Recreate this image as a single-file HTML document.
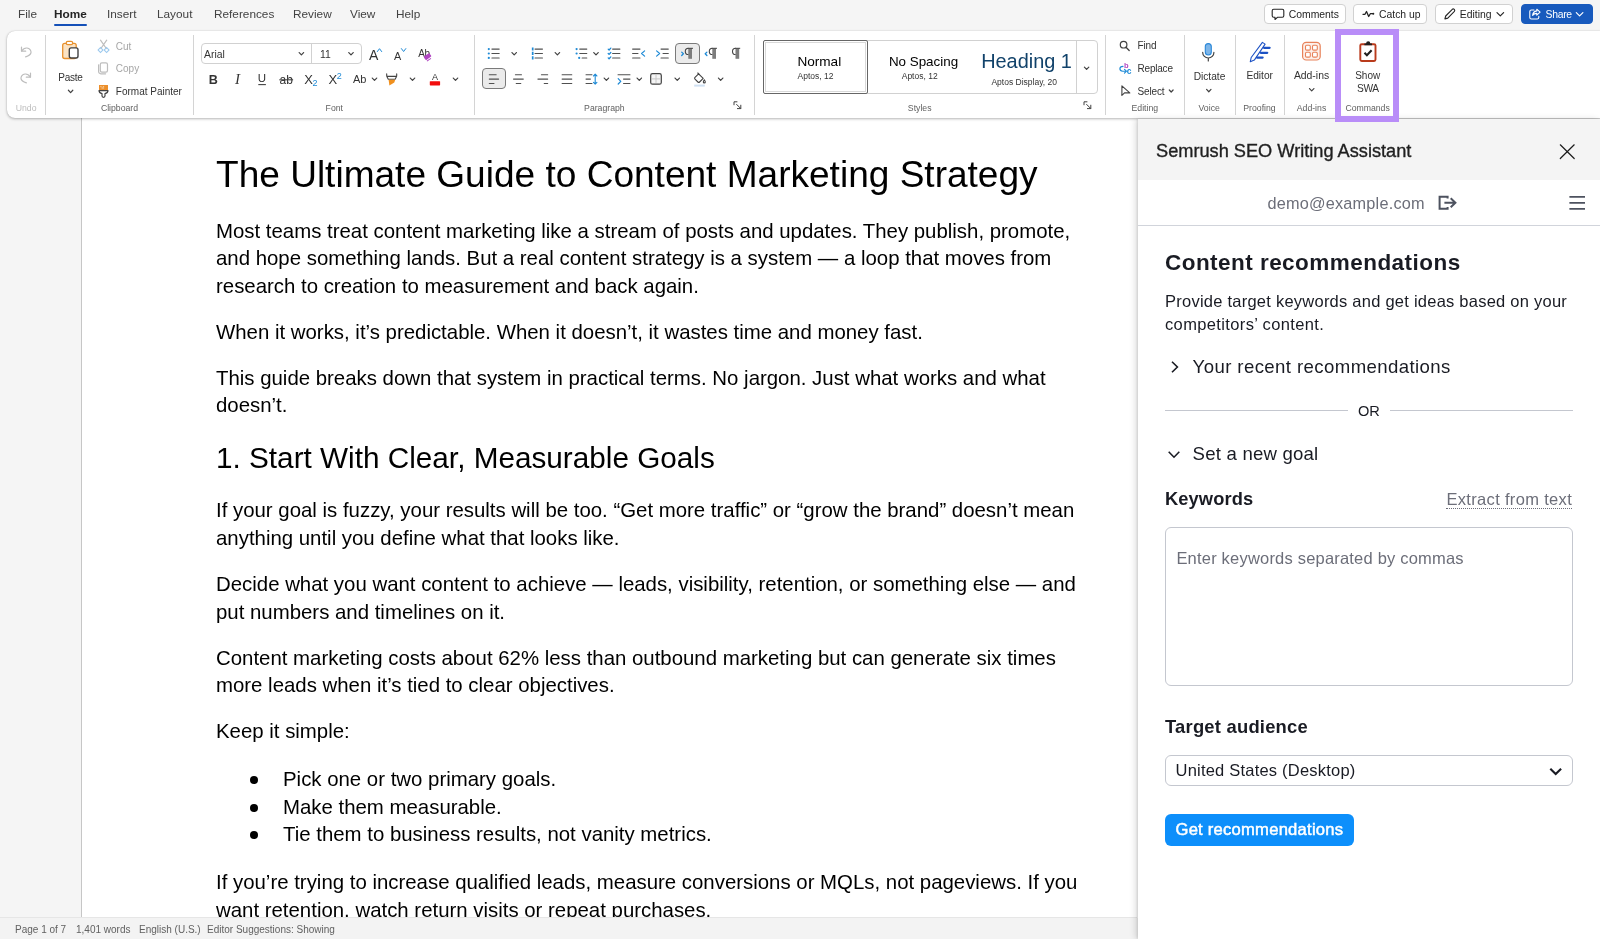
<!DOCTYPE html>
<html lang="en">
<head>
<meta charset="utf-8">
<title>Document - Word</title>
<style>
*{box-sizing:border-box;margin:0;padding:0}
html,body{width:1600px;height:939px;overflow:hidden;background:#f5f5f5;font-family:"Liberation Sans",sans-serif;color:#242424}
.abs{position:absolute}
#app{position:relative;width:1600px;height:939px;overflow:hidden;background:#f5f5f5;will-change:transform}
/* tabs */
.tab{position:absolute;top:7px;font-size:11.8px;line-height:14px;color:#424242;white-space:nowrap}
.tab.on{font-weight:700;color:#242424}
#homeline{position:absolute;left:54px;top:24px;width:33px;height:2px;background:#1450b8;border-radius:1px}
.tbtn{position:absolute;top:4px;height:20px;border:1px solid #d1d1d1;border-radius:4px;background:#fff;font-size:10.4px;line-height:18px;color:#242424;white-space:nowrap}
.tbtn span{position:absolute;top:1px}
/* ribbon */
#ribbon{position:absolute;left:6.5px;top:31px;width:1600px;height:87px;background:#fff;border-radius:8px;box-shadow:0 1px 3px rgba(0,0,0,.28),0 0 1px rgba(0,0,0,.2)}
.sep{position:absolute;top:35px;width:1px;height:80px;background:#d4d4d4}
.rl{position:absolute;font-size:11px;line-height:13px;color:#333;white-space:nowrap}
.rl.c{transform:translateX(-50%)}
.rl.dis{color:#a6a6a6}
.gl{position:absolute;top:101.6px;font-size:8.7px;line-height:12px;color:#616161;white-space:nowrap;transform:translateX(-50%)}
.gl.dis{color:#bdbdbd}
/* doc */
#page{position:absolute;left:81px;top:117px;width:1100px;height:801px;background:#fff;border-left:1px solid #c6c6c6}
.dl{position:absolute;left:216px;white-space:nowrap;color:#000;font-size:20.4px;line-height:28px}
.dl.t{font-size:37.06px;line-height:44px}
.dl.h{font-size:29.73px;line-height:35px}
.bul{position:absolute;left:250px;width:8px;height:8px;border-radius:50%;background:#000}
/* status */
#status{position:absolute;left:0;top:917px;width:1137px;height:22px;background:#f3f3f3;border-top:1px solid #e6e6e6}
#status span{position:absolute;top:5px;font-size:10px;line-height:13px;color:#616161;white-space:nowrap}
/* panel */
#panel{position:absolute;left:1138px;top:119px;width:462px;height:820px;background:#fff;box-shadow:-1px 0 2px rgba(0,0,0,.10),-3px 0 6px rgba(0,0,0,.12)}
#phead{position:absolute;left:0;top:0;width:462px;height:61px;background:#f4f4f4}
#ptitle{position:absolute;left:18px;top:21px;font-size:18.2px;line-height:22px;color:#1f1f1f;white-space:nowrap;-webkit-text-stroke:.35px #1f1f1f}
#prow{position:absolute;left:0;top:61px;width:462px;height:46px;background:#fff;border-bottom:1px solid #d1d4db}
.pt{position:absolute;white-space:nowrap;color:#191b23}
</style>
</head>
<body>
<div id="app">
<!-- TABS -->
<div class="tab" style="left:18px">File</div>
<div class="tab on" style="left:54px">Home</div>
<div class="tab" style="left:107px">Insert</div>
<div class="tab" style="left:157px">Layout</div>
<div class="tab" style="left:214px">References</div>
<div class="tab" style="left:293px">Review</div>
<div class="tab" style="left:350px">View</div>
<div class="tab" style="left:396px">Help</div>
<div id="homeline"></div>
<div class="tbtn" style="left:1263.7px;width:82.8px;"><span style="left:24.0px;">Comments</span></div>
<div class="tbtn" style="left:1353.4px;width:74.0px;"><span style="left:24.6px;">Catch up</span></div>
<div class="tbtn" style="left:1434.5px;width:78.9px;"><span style="left:24.3px;">Editing</span></div>
<div class="tbtn" style="left:1520.7px;width:72.0px;background:#185abd;border-color:#185abd;color:#fff;"><span style="left:23.9px;letter-spacing:-.3px;">Share</span></div>
<svg class="abs" style="left:1250px;top:0" width="350" height="28" viewBox="1250 0 350 28"><path d="M1273.700 9.200h8.600a1.500 1.500 0 0 1 1.500 1.500v5a1.500 1.500 0 0 1-1.500 1.500h-4.600l-2.700 2.300v-2.300h-1.300a1.500 1.500 0 0 1-1.500-1.500v-5a1.500 1.500 0 0 1 1.500-1.500z" fill="none" stroke="#242424" stroke-width="1.100" stroke-linejoin="round"/><path d="M1363 14.300h2l1.500-2.800 2.200 5 1.600-2.800h2.600" fill="none" stroke="#242424" stroke-width="1.300" stroke-linecap="round" stroke-linejoin="round"/><circle cx="1373.300" cy="13.700" r="1" fill="#242424"/><path d="M1452.300 9.300a1.500 1.500 0 0 1 2.100 2.100l-6.600 6.700-2.900.8.800-2.900z" fill="none" stroke="#242424" stroke-width="1.100" stroke-linejoin="round"/><path d="M1497 12.600l3.300 3.300 3.300-3.300" fill="none" stroke="#242424" stroke-width="1.200" stroke-linecap="round" stroke-linejoin="round"/><path d="M1534 10h-2.600a1.600 1.600 0 0 0-1.600 1.600v5.800a1.600 1.600 0 0 0 1.600 1.600h5.800a1.600 1.600 0 0 0 1.600-1.600v-1" fill="none" stroke="#fff" stroke-width="1.100" stroke-linecap="round"/><path d="M1536.800 9.200l3.300 3-3.300 3v-1.800c-2 0-3.200.6-4.200 2 .3-2.600 1.700-4.200 4.200-4.500z" fill="none" stroke="#fff" stroke-width="1.100" stroke-linejoin="round"/><path d="M1576.300 12.600l3.300 3.300 3.300-3.300" fill="none" stroke="#fff" stroke-width="1.200" stroke-linecap="round" stroke-linejoin="round"/></svg>
<!-- PAGE -->
<div id="page"></div>
<!-- DOC-TEXT -->
<div class="dl t" style="top:152px">The Ultimate Guide to Content Marketing Strategy</div>
<div class="dl" style="top:217px">Most teams treat content marketing like a stream of posts and updates. They publish, promote,</div>
<div class="dl" style="top:244px">and hope something lands. But a real content strategy is a system — a loop that moves from</div>
<div class="dl" style="top:272px">research to creation to measurement and back again.</div>
<div class="dl" style="top:318px">When it works, it’s predictable. When it doesn’t, it wastes time and money fast.</div>
<div class="dl" style="top:364px">This guide breaks down that system in practical terms. No jargon. Just what works and what</div>
<div class="dl" style="top:391px">doesn’t.</div>
<div class="dl h" style="top:440px">1. Start With Clear, Measurable Goals</div>
<div class="dl" style="top:496px">If your goal is fuzzy, your results will be too. “Get more traffic” or “grow the brand” doesn’t mean</div>
<div class="dl" style="top:524px">anything until you define what that looks like.</div>
<div class="dl" style="top:570px">Decide what you want content to achieve — leads, visibility, retention, or something else — and</div>
<div class="dl" style="top:598px">put numbers and timelines on it.</div>
<div class="dl" style="top:644px">Content marketing costs about 62% less than outbound marketing but can generate six times</div>
<div class="dl" style="top:671px">more leads when it’s tied to clear objectives.</div>
<div class="dl" style="top:717px">Keep it simple:</div>
<div class="bul" style="top:776px"></div><div class="dl" style="left:283px;top:765px">Pick one or two primary goals.</div>
<div class="bul" style="top:804px"></div><div class="dl" style="left:283px;top:793px">Make them measurable.</div>
<div class="bul" style="top:831px"></div><div class="dl" style="left:283px;top:820px">Tie them to business results, not vanity metrics.</div>
<div class="dl" style="top:868px">If you’re trying to increase qualified leads, measure conversions or MQLs, not pageviews. If you</div>
<div class="dl" style="top:896px">want retention, watch return visits or repeat purchases.</div>
<!-- STATUS -->
<div id="status"><span style="left:15px">Page 1 of 7</span><span style="left:76px">1,401 words</span><span style="left:139px">English (U.S.)</span><span style="left:207px">Editor Suggestions: Showing</span></div>
<!-- RIBBON -->
<div id="ribbon"></div>
<div class="sep" style="left:45px"></div>
<div class="sep" style="left:193px"></div>
<div class="sep" style="left:474px"></div>
<div class="sep" style="left:754px"></div>
<div class="sep" style="left:1105px"></div>
<div class="sep" style="left:1184px"></div>
<div class="sep" style="left:1234.5px"></div>
<div class="sep" style="left:1284px"></div>
<div class="gl dis" style="left:26.1px">Undo</div>
<div class="rl c" style="left:70.5px;top:70.9px;font-size:10px;letter-spacing:-.25px">Paste</div>
<div class="rl dis" style="left:115.8px;top:39.6px;font-size:10px;">Cut</div>
<div class="rl dis" style="left:115.8px;top:62.3px;font-size:10px;">Copy</div>
<div class="rl " style="left:115.8px;top:85.0px;font-size:10px;">Format Painter</div>
<div class="gl " style="left:119.5px">Clipboard</div>
<div class="abs" style="left:201px;top:43px;width:161px;height:21px;border:1px solid #d1d1d1;border-radius:4px;background:#fff"></div><div class="abs" style="left:311px;top:44px;width:1px;height:19px;background:#d1d1d1"></div>
<div class="rl " style="left:204px;top:47.9px;font-size:10.4px;">Arial</div>
<div class="rl " style="left:320px;top:47.9px;font-size:10.4px;">11</div>
<div class="rl " style="left:369px;top:48.7px;font-size:14px;">A</div>
<div class="rl " style="left:394px;top:49.7px;font-size:10.8px;">A</div>
<div class="rl " style="left:418.3px;top:46.6px;font-size:10px;letter-spacing:-.5px">Ab</div>
<div class="rl c" style="left:213.3px;top:73.7px;font-size:12.6px;font-weight:700">B</div>
<div class="rl c" style="left:237.6px;top:73.0px;font-size:15px;font-style:italic;font-family:Liberation Serif,serif">I</div>
<div class="rl c" style="left:262px;top:72.3px;font-size:11.5px;">U</div>
<div class="rl c" style="left:286.2px;top:73.5px;font-size:12px;">ab</div>
<div class="rl " style="left:304.2px;top:73.2px;font-size:13px;">X</div>
<div class="rl " style="left:312.4px;top:77.3px;font-size:9px;color:#1e8ad6">2</div>
<div class="rl " style="left:328.5px;top:73.2px;font-size:13px;">X</div>
<div class="rl " style="left:336.8px;top:69.9px;font-size:9px;color:#1e8ad6">2</div>
<div class="rl " style="left:353px;top:72.8px;font-size:11px;letter-spacing:-.2px">Ab</div>
<div class="rl c" style="left:435px;top:70.5px;font-size:9px;">A</div>
<div class="gl " style="left:334.3px">Font</div>
<div class="abs" style="left:674.5px;top:43px;width:25px;height:21px;border:1px solid #7a7a7a;border-radius:4px;background:#ebebeb"></div>
<div class="abs" style="left:482px;top:68px;width:24px;height:21px;border:1px solid #7a7a7a;border-radius:4px;background:#ebebeb"></div>
<div class="gl " style="left:604.4px">Paragraph</div>
<div class="abs" style="left:763px;top:40px;width:335px;height:54px;border:1px solid #d1d1d1;border-radius:4px;background:#fff"></div>
<div class="abs" style="left:763px;top:40px;width:105px;height:54px;border:1px solid #666;border-radius:2px;background:#fff;box-shadow:inset 0 0 0 1px #fff,inset 0 0 0 2px #d9d9d9"></div>
<div class="abs" style="left:1076px;top:41px;width:1px;height:52px;background:#d1d1d1"></div>
<div class="rl c" style="left:819.3px;top:54.6px;font-size:13.6px;color:#000">Normal</div>
<div class="rl c" style="left:815.5px;top:70.1px;font-size:8.5px;">Aptos, 12</div>
<div class="rl c" style="left:923.5px;top:54.6px;font-size:13.4px;color:#000">No Spacing</div>
<div class="rl c" style="left:919.7px;top:70.1px;font-size:8.5px;">Aptos, 12</div>
<div class="rl c" style="left:1026.5px;top:54.7px;font-size:19.9px;color:#11426a">Heading 1</div>
<div class="rl c" style="left:1024.2px;top:75.7px;font-size:8.5px;">Aptos Display, 20</div>
<div class="gl " style="left:919.7px">Styles</div>
<div class="rl " style="left:1137.6px;top:39.4px;font-size:10px;letter-spacing:-.2px">Find</div>
<div class="rl " style="left:1137.6px;top:62.3px;font-size:10px;letter-spacing:-.22px">Replace</div>
<div class="rl " style="left:1137.6px;top:85.0px;font-size:10px;letter-spacing:-.15px">Select</div>
<div class="rl " style="left:1123.9px;top:58.6px;font-size:7.5px;color:#b146c2;font-weight:700">b</div>
<div class="rl " style="left:1126.8px;top:65.1px;font-size:8.5px;color:#1e8ad6;font-weight:700">c</div>
<div class="gl " style="left:1144.8px">Editing</div>
<div class="rl c" style="left:1209.5px;top:69.6px;font-size:10.2px;">Dictate</div>
<div class="gl " style="left:1209.2px">Voice</div>
<div class="rl c" style="left:1259.7px;top:68.9px;font-size:10.2px;">Editor</div>
<div class="gl " style="left:1259.5px">Proofing</div>
<div class="rl c" style="left:1311.5px;top:68.9px;font-size:10.4px;">Add-ins</div>
<div class="gl " style="left:1311.5px">Add-ins</div>
<div class="rl c" style="left:1367.7px;top:68.9px;font-size:10px;">Show</div>
<div class="rl c" style="left:1367.9px;top:82.2px;font-size:10.2px;letter-spacing:-.3px">SWA</div>
<div class="gl " style="left:1367.6px">Commands</div>
<svg class="abs" style="left:0;top:0" width="1600" height="120" viewBox="0 0 1600 120"><g fill="none" stroke="#bdbdbd" stroke-width="1.2" stroke-linecap="round" stroke-linejoin="round"><path d="M21.5 47v4.2h4.2"/><path d="M21.8 51c1.2-2 3-3.2 5.2-3 2.6.3 4.3 2.400 4 4.600-.3 1.800-2.200 3.200-5.400 4.300"/><path d="M30.500 73v4.200h-4.200"/><path d="M30.200 77c-1.200-2-3-3.200-5.200-3-2.600.3-4.300 2.400-4 4.600.3 1.800 2.200 3.200 5.400 4.300"/></g>
<g><rect x="62.700" y="43.300" width="13.500" height="15.200" rx="2" fill="#fbe3c4" stroke="#e8912d" stroke-width="1.300"/><rect x="66.200" y="41.400" width="6.500" height="3.200" rx="1.600" fill="#fff" stroke="#e8912d" stroke-width="1.200"/><rect x="69.300" y="47.900" width="8.700" height="10.100" rx="1.900" fill="#fff" stroke="#424242" stroke-width="1.400"/></g>
<path d="M68.40 90.25 L70.60 92.55 L72.80 90.25" fill="none" stroke="#424242" stroke-width="1.2" stroke-linecap="round" stroke-linejoin="round"/>
<g fill="none" stroke-linecap="round"><path d="M100.500 40.200l5.800 8.300M106.700 40.200l-5.800 8.300" stroke="#bdbdbd" stroke-width="1.200"/><rect x="98.800" y="48.300" width="3.400" height="3.400" transform="rotate(45 100.500 50)" stroke="#9cc9ee" stroke-width="1.100"/><rect x="104.900" y="48.300" width="3.400" height="3.400" transform="rotate(45 106.600 50)" stroke="#9cc9ee" stroke-width="1.100"/></g>
<g fill="none" stroke="#bdbdbd" stroke-width="1.200"><rect x="100.300" y="62.800" width="7.200" height="9.300" rx="1.600"/><path d="M98.600 64.800v6.800a2.200 2.200 0 0 0 2.200 2.200h4.800" stroke-linecap="round"/></g>
<g><path d="M99 85h9v5.600h-9z" fill="#ec8f2c"/><path d="M100.300 86.700h1.300M102.800 86.700h1.300M101.500 88h2.600" stroke="#fbd9b0" stroke-width=".9"/><path d="M99 90.600h9c0 2-1.200 2.700-3 3v2.200a1.500 1.500 0 0 1-3 0v-2.200c-1.800-.3-3-1-3-3z" fill="#fff" stroke="#424242" stroke-width="1.200" stroke-linejoin="round"/></g>
<path d="M299.20 52.55 L301.40 54.85 L303.60 52.55" fill="none" stroke="#424242" stroke-width="1.2" stroke-linecap="round" stroke-linejoin="round"/>
<path d="M348.80 52.55 L351.00 54.85 L353.20 52.55" fill="none" stroke="#424242" stroke-width="1.2" stroke-linecap="round" stroke-linejoin="round"/>
<path d="M377.300 51.600l2.200-2.900 2.200 2.900" fill="none" stroke="#1e8ad6" stroke-width="1" stroke-linecap="round" stroke-linejoin="round"/>
<path d="M401.400 48.600l2.200 2.900 2.200-2.900" fill="none" stroke="#1e8ad6" stroke-width="1" stroke-linecap="round" stroke-linejoin="round"/>
<g transform="rotate(-35 427.500 56.500)"><rect x="424" y="54.500" width="7" height="4.200" rx="1" fill="#b146c2"/><path d="M424.300 60h5" stroke="#b146c2" stroke-width="1"/></g>
<path d="M279.300 79.800h13.800" stroke="#424242" stroke-width="1.100"/>
<path d="M258.300 84.600h7.600" stroke="#424242" stroke-width="1.100"/>
<path d="M372.30 78.05 L374.50 80.35 L376.70 78.05" fill="none" stroke="#424242" stroke-width="1.2" stroke-linecap="round" stroke-linejoin="round"/>
<g><path d="M386.700 73.900v1.700c0 .5.100 1 .4 1.400l1.200 2.300h6.800l1.200-2.300c.3-.4.400-.9.400-1.400v-1.700M387.200 76.400h9.200" fill="none" stroke="#424242" stroke-width="1.100" stroke-linecap="round" stroke-linejoin="round"/><path d="M388.600 79.800h6.600l-.9 2.800-4.900 2.900z" fill="#f0901e"/></g>
<path d="M410.30 78.05 L412.50 80.35 L414.70 78.05" fill="none" stroke="#424242" stroke-width="1.2" stroke-linecap="round" stroke-linejoin="round"/>
<rect x="429.800" y="81.200" width="10.300" height="4.200" rx=".6" fill="#f20d0d"/>
<path d="M453.30 78.05 L455.50 80.35 L457.70 78.05" fill="none" stroke="#424242" stroke-width="1.2" stroke-linecap="round" stroke-linejoin="round"/>
<circle cx="488.800" cy="49.1" r="1.100" fill="#1e8ad6"/><circle cx="488.800" cy="53.5" r="1.100" fill="#1e8ad6"/><circle cx="488.800" cy="57.9" r="1.100" fill="#1e8ad6"/><path d="M491.90 49.10H499.20" stroke="#505050" stroke-width="1.05" stroke-linecap="round"/><path d="M491.90 53.50H499.20" stroke="#505050" stroke-width="1.05" stroke-linecap="round"/><path d="M491.90 57.90H499.20" stroke="#505050" stroke-width="1.05" stroke-linecap="round"/>
<path d="M512.00 52.55 L514.20 54.85 L516.40 52.55" fill="none" stroke="#424242" stroke-width="1.2" stroke-linecap="round" stroke-linejoin="round"/>
<path d="M532.700 47.400v12.400" stroke="#1e8ad6" stroke-width="1.700" stroke-dasharray="3.200 1.200"/><path d="M535.00 49.10H542.50" stroke="#505050" stroke-width="1.05" stroke-linecap="round"/><path d="M535.00 53.50H542.50" stroke="#505050" stroke-width="1.05" stroke-linecap="round"/><path d="M535.00 57.90H542.50" stroke="#505050" stroke-width="1.05" stroke-linecap="round"/>
<path d="M555.20 52.55 L557.40 54.85 L559.60 52.55" fill="none" stroke="#424242" stroke-width="1.2" stroke-linecap="round" stroke-linejoin="round"/>
<circle cx="576.600" cy="49.100" r="1.100" fill="#1e8ad6"/><circle cx="576.600" cy="53.500" r="1.100" fill="#1e8ad6"/><circle cx="579.200" cy="57.900" r="1.100" fill="#1e8ad6"/><path d="M579.70 49.10H586.80" stroke="#505050" stroke-width="1.05" stroke-linecap="round"/><path d="M579.70 53.50H586.80" stroke="#505050" stroke-width="1.05" stroke-linecap="round"/><path d="M582.10 57.90H586.80" stroke="#505050" stroke-width="1.05" stroke-linecap="round"/>
<path d="M593.80 52.55 L596.00 54.85 L598.20 52.55" fill="none" stroke="#424242" stroke-width="1.2" stroke-linecap="round" stroke-linejoin="round"/>
<path d="M608.200 49.1l.9.9 1.700-1.900" fill="none" stroke="#1e8ad6" stroke-width="1.300" stroke-linecap="round" stroke-linejoin="round"/><path d="M608.200 53.5l.9.9 1.700-1.900" fill="none" stroke="#1e8ad6" stroke-width="1.300" stroke-linecap="round" stroke-linejoin="round"/><path d="M608.200 57.9l.9.9 1.700-1.900" fill="none" stroke="#1e8ad6" stroke-width="1.300" stroke-linecap="round" stroke-linejoin="round"/><path d="M612.60 49.10H619.90" stroke="#505050" stroke-width="1.05" stroke-linecap="round"/><path d="M612.60 53.50H619.90" stroke="#505050" stroke-width="1.05" stroke-linecap="round"/><path d="M612.60 57.90H619.90" stroke="#505050" stroke-width="1.05" stroke-linecap="round"/>
<path d="M632.60 49.10H640.00" stroke="#505050" stroke-width="1.05" stroke-linecap="round"/><path d="M632.60 53.50H638.00" stroke="#505050" stroke-width="1.05" stroke-linecap="round"/><path d="M632.60 57.90H640.00" stroke="#505050" stroke-width="1.05" stroke-linecap="round"/><path d="M644.600 50.900l-3 2.600 3 2.600" fill="none" stroke="#1e8ad6" stroke-width="1.200" stroke-linecap="round" stroke-linejoin="round"/>
<path d="M661.00 49.10H668.30" stroke="#505050" stroke-width="1.05" stroke-linecap="round"/><path d="M663.00 53.50H668.30" stroke="#505050" stroke-width="1.05" stroke-linecap="round"/><path d="M661.00 57.90H668.30" stroke="#505050" stroke-width="1.05" stroke-linecap="round"/><path d="M656.600 50.900l3 2.600-3 2.600" fill="none" stroke="#1e8ad6" stroke-width="1.200" stroke-linecap="round" stroke-linejoin="round"/>
<path d="M681.700 52.100l1.700 1.700-1.700 1.700" fill="none" stroke="#1e8ad6" stroke-width="1.300" stroke-linecap="round" stroke-linejoin="round"/><rect x="688.30" y="48.30" width="3.700" height="10.500" fill="#7d7d7d"/><path d="M688.40 48.30a3.100 3.100 0 0 0 0 6.200" fill="none" stroke="#424242" stroke-width="1.100"/><path d="M688.20 48.30h4.400" stroke="#424242" stroke-width="1" stroke-linecap="round"/>
<path d="M706.900 52.100l-1.700 1.700 1.700 1.700" fill="none" stroke="#1e8ad6" stroke-width="1.300" stroke-linecap="round" stroke-linejoin="round"/><rect x="712.30" y="48.30" width="3.700" height="10.500" fill="#7d7d7d"/><path d="M712.40 48.30a3.100 3.100 0 0 0 0 6.200" fill="none" stroke="#424242" stroke-width="1.100"/><path d="M712.20 48.30h4.400" stroke="#424242" stroke-width="1" stroke-linecap="round"/>
<rect x="735.50" y="48.30" width="3.700" height="10.500" fill="#7d7d7d"/><path d="M735.60 48.30a3.100 3.100 0 0 0 0 6.200" fill="none" stroke="#424242" stroke-width="1.100"/><path d="M735.40 48.30h4.400" stroke="#424242" stroke-width="1" stroke-linecap="round"/>
<path d="M489.30 74.80H496.20" stroke="#505050" stroke-width="1.05" stroke-linecap="round"/><path d="M489.30 79.10H498.60" stroke="#505050" stroke-width="1.05" stroke-linecap="round"/><path d="M489.30 83.50H494.00" stroke="#505050" stroke-width="1.05" stroke-linecap="round"/>
<path d="M515.40 74.80H521.50" stroke="#505050" stroke-width="1.05" stroke-linecap="round"/><path d="M513.50 79.10H523.30" stroke="#505050" stroke-width="1.05" stroke-linecap="round"/><path d="M516.20 83.50H520.80" stroke="#505050" stroke-width="1.05" stroke-linecap="round"/>
<path d="M541.40 74.80H547.70" stroke="#505050" stroke-width="1.05" stroke-linecap="round"/><path d="M537.90 79.10H547.70" stroke="#505050" stroke-width="1.05" stroke-linecap="round"/><path d="M544.20 83.50H547.70" stroke="#505050" stroke-width="1.05" stroke-linecap="round"/>
<path d="M562.10 74.80H571.80" stroke="#505050" stroke-width="1.05" stroke-linecap="round"/><path d="M562.10 79.10H571.80" stroke="#505050" stroke-width="1.05" stroke-linecap="round"/><path d="M562.10 83.50H571.80" stroke="#505050" stroke-width="1.05" stroke-linecap="round"/>
<path d="M586.00 74.80H592.00" stroke="#505050" stroke-width="1.05" stroke-linecap="round"/><path d="M586.00 79.10H590.40" stroke="#505050" stroke-width="1.05" stroke-linecap="round"/><path d="M586.00 83.50H592.00" stroke="#505050" stroke-width="1.05" stroke-linecap="round"/><path d="M595.200 74.300v9.800M593.500 76l1.700-1.800 1.700 1.800M593.500 82.400l1.700 1.800 1.700-1.800" fill="none" stroke="#1e8ad6" stroke-width="1.100" stroke-linecap="round" stroke-linejoin="round"/>
<path d="M604.20 78.05 L606.40 80.35 L608.60 78.05" fill="none" stroke="#424242" stroke-width="1.2" stroke-linecap="round" stroke-linejoin="round"/>
<path d="M618.00 74.80H630.00" stroke="#505050" stroke-width="1.05" stroke-linecap="round"/><path d="M623.50 79.10H630.00" stroke="#505050" stroke-width="1.05" stroke-linecap="round"/><path d="M623.50 83.50H630.00" stroke="#505050" stroke-width="1.05" stroke-linecap="round"/><path d="M618.200 78.600l2.600 2.700-2.600 2.700" fill="none" stroke="#1e8ad6" stroke-width="1.200" stroke-linecap="round" stroke-linejoin="round"/>
<path d="M637.10 78.05 L639.30 80.35 L641.50 78.05" fill="none" stroke="#424242" stroke-width="1.2" stroke-linecap="round" stroke-linejoin="round"/>
<rect x="650.700" y="73.600" width="10.600" height="10.600" rx="1.800" fill="#f5f5f5" stroke="#424242" stroke-width="1.200"/><path d="M656 75v7.800M652 78.900h8" stroke="#c8c8c8" stroke-width="1"/>
<path d="M675.05 78.05 L677.25 80.35 L679.45 78.05" fill="none" stroke="#424242" stroke-width="1.2" stroke-linecap="round" stroke-linejoin="round"/>
<g fill="none" stroke="#424242" stroke-width="1.100" stroke-linejoin="round"><path d="M698.600 73.800l4.600 4.600-3.600 3.600a1.200 1.200 0 0 1-1.700 0l-2.900-2.900a1.200 1.200 0 0 1 0-1.700z"/><path d="M697.800 73l1.300 1.300" stroke-linecap="round"/><path d="M704.300 79.800c.7 1 1 1.600 1 2.100a1 1 0 0 1-2 0c0-.5.300-1.100 1-2.100z"/></g><rect x="694.200" y="84.600" width="10.600" height="2" fill="#cfe0f2"/>
<path d="M718.45 78.05 L720.65 80.35 L722.85 78.05" fill="none" stroke="#424242" stroke-width="1.2" stroke-linecap="round" stroke-linejoin="round"/>
<path d="M734 104.8V101.8h3M736.6 104.39999999999999l4 4M740.8 105.2v3.400h-3.400" fill="none" stroke="#424242" stroke-width="1" stroke-linecap="round" stroke-linejoin="round"/>
<path d="M1084 104.8V101.8h3M1086.6 104.39999999999999l4 4M1090.8 105.2v3.400h-3.400" fill="none" stroke="#424242" stroke-width="1" stroke-linecap="round" stroke-linejoin="round"/>
<path d="M1084.40 67.15 L1086.60 69.45 L1088.80 67.15" fill="none" stroke="#424242" stroke-width="1.2" stroke-linecap="round" stroke-linejoin="round"/>
<circle cx="1123.600" cy="44.700" r="3.300" fill="none" stroke="#424242" stroke-width="1.200"/><path d="M1126 47.200l3.200 3.300" stroke="#424242" stroke-width="1.300" stroke-linecap="round"/>
<g fill="none" stroke="#1e8ad6" stroke-width="1.150" stroke-linecap="round" stroke-linejoin="round"><path d="M1123 66.400c-2.100 0-3.100 1.200-3.100 2.400 0 1.400 1.100 2.400 2.900 2.400h3"/><path d="M1124.500 69.300l1.900 1.900-1.900 1.900"/></g>
<path d="M1121.900 85.800v9.600l2.600-2.500h5.300z" fill="none" stroke="#424242" stroke-width="1.100" stroke-linejoin="round"/>
<path d="M1169.30 90.00 L1171.20 92.00 L1173.10 90.00" fill="none" stroke="#424242" stroke-width="1.2" stroke-linecap="round" stroke-linejoin="round"/>
<g><rect x="1205.300" y="43.600" width="6" height="11.400" rx="3" fill="#7db5e8" stroke="#2b88d8" stroke-width="1.100"/><path d="M1202.700 52.400a5.600 5.600 0 0 0 11.200 0M1208.300 58v3" fill="none" stroke="#424242" stroke-width="1.200" stroke-linecap="round"/></g>
<path d="M1206.60 89.45 L1208.80 91.75 L1211.00 89.45" fill="none" stroke="#424242" stroke-width="1.2" stroke-linecap="round" stroke-linejoin="round"/>
<g stroke="#1d52c4" stroke-linecap="round" stroke-linejoin="round"><path d="M1262.400 42.400l2.700 1.700-10.800 16-4 1.600.900-4.200z" fill="#fff" stroke-width="1.100"/><path d="M1264 47.800h5.600M1260.800 52.800h6.400M1257 57.600h5.600" fill="none" stroke-width="2.300"/></g>
<g fill="none" stroke="#e8825a"><rect x="1302.600" y="42.400" width="17.600" height="17.600" rx="3.600" fill="#fdf0ea" stroke-width="1.200"/><rect x="1305.500" y="45.300" width="4.800" height="4.800" rx="1.200" fill="#fff" stroke-width="1.100"/><rect x="1312.500" y="45.300" width="4.800" height="4.800" rx="1.200" fill="#fff" stroke-width="1.100"/><rect x="1305.500" y="52.300" width="4.800" height="4.800" rx="1.200" fill="#fff" stroke-width="1.100"/><rect x="1312.500" y="52.300" width="4.800" height="4.800" rx="1.200" fill="#fff" stroke-width="1.100"/></g>
<path d="M1309.50 88.55 L1311.70 90.85 L1313.90 88.55" fill="none" stroke="#424242" stroke-width="1.2" stroke-linecap="round" stroke-linejoin="round"/>
<g><rect x="1360.300" y="44.200" width="15.200" height="16.800" rx="1.400" fill="#fff" stroke="#b93b1c" stroke-width="1.900"/><path d="M1364.400 45.200v-1.800h1.700a2.100 2.100 0 0 1 4.200 0h1.700v1.800z" fill="#1f1f1f"/><path d="M1364.500 52.800l2.400 2.400 4.700-4.900" fill="none" stroke="#1f1f1f" stroke-width="2.100"/></g></svg>
<!-- PANEL -->
<div id="panel">
<div id="phead"><div id="ptitle">Semrush SEO Writing Assistant</div></div>
<div id="prow"></div>
<svg class="abs" style="left:418px;top:21px" width="24" height="24" viewBox="1556 140 24 24"><path d="M1560.300 144.800l13.900 13.700M1574.200 144.800l-13.900 13.700" stroke="#1b1b1b" stroke-width="1.200" stroke-linecap="round"/></svg>
<div class="pt" style="left:129.5px;top:75px;font-size:16.3px;line-height:18px;font-weight:400;color:#6c6e79;letter-spacing:0.2px;">demo@example.com</div>
<svg class="abs" style="left:296px;top:71px" width="26" height="26" viewBox="1434 190 26 26"><path d="M1447.600 198.600v-1.900h-8v12.100h8v-1.900M1444.400 202.800h10.400M1450.700 198.300l4.700 4.500-4.700 4.500" fill="none" stroke="#4d525f" stroke-width="2" stroke-linejoin="miter"/></svg>
<svg class="abs" style="left:428px;top:73px" width="22" height="22" viewBox="1566 192 22 22"><path d="M1569.400 196.900h15.600M1569.400 202.850h15.600M1569.400 208.800h15.600" stroke="#4d525f" stroke-width="1.700"/></svg>
<div class="pt" style="left:27.0px;top:131px;font-size:22.5px;line-height:25px;font-weight:700;color:#191b23;letter-spacing:0.46px;">Content recommendations</div>
<div class="pt" style="left:27.0px;top:173px;font-size:16.5px;line-height:18px;font-weight:400;color:#191b23;letter-spacing:0.24px;">Provide target keywords and get ideas based on your</div>
<div class="pt" style="left:27.0px;top:196px;font-size:16.5px;line-height:18px;font-weight:400;color:#191b23;letter-spacing:0.36px;">competitors’ content.</div>
<svg class="abs" style="left:31px;top:241px" width="12" height="14" viewBox="0 0 12 14"><path d="M3 1.700l5.400 5.300L3 12.300" fill="none" stroke="#191b23" stroke-width="1.600"/></svg>
<div class="pt" style="left:54.6px;top:237px;font-size:18.6px;line-height:21px;font-weight:400;color:#191b23;letter-spacing:0.4px;">Your recent recommendations</div>
<div class="abs" style="left:27px;top:291px;width:183px;height:1px;background:#c4c7cf"></div>
<div class="abs" style="left:251.5px;top:291px;width:183px;height:1px;background:#c4c7cf"></div>
<div class="pt" style="left:220.0px;top:284px;font-size:14.6px;line-height:16px;font-weight:400;color:#191b23;letter-spacing:-0.2px;">OR</div>
<svg class="abs" style="left:29px;top:330px" width="14" height="12" viewBox="0 0 14 12"><path d="M1.700 2.800L7 8.200l5.300-5.400" fill="none" stroke="#191b23" stroke-width="1.600"/></svg>
<div class="pt" style="left:54.6px;top:324px;font-size:18.6px;line-height:21px;font-weight:400;color:#191b23;letter-spacing:0.2px;">Set a new goal</div>
<div class="pt" style="left:27.0px;top:369px;font-size:18.3px;line-height:21px;font-weight:700;color:#191b23;letter-spacing:0.1px;">Keywords</div>
<div class="pt" style="left:308.4px;top:371px;font-size:16.5px;line-height:18px;font-weight:400;color:#6c6e79;letter-spacing:0.33px;border-bottom:1px dotted #6c6e79;padding-bottom:0;height:19px">Extract from text</div>
<div class="abs" style="left:26.7px;top:408px;width:408px;height:159px;border:1px solid #c4c7cf;border-radius:6px;background:#fff"></div>
<div class="pt" style="left:38.4px;top:430px;font-size:16.5px;line-height:18px;font-weight:400;color:#6c6e79;letter-spacing:0.2px;">Enter keywords separated by commas</div>
<div class="pt" style="left:27.0px;top:597px;font-size:18.4px;line-height:21px;font-weight:700;color:#191b23;letter-spacing:0.22px;">Target audience</div>
<div class="abs" style="left:26.7px;top:636px;width:408px;height:31px;border:1px solid #c4c7cf;border-radius:6px;background:#fff"></div>
<div class="pt" style="left:37.5px;top:642px;font-size:16.5px;line-height:18px;font-weight:400;color:#191b23;letter-spacing:0.21px;">United States (Desktop)</div>
<svg class="abs" style="left:410px;top:646px" width="16" height="13" viewBox="0 0 16 13"><path d="M2.300 3.700l5.400 5.300 5.400-5.300" fill="none" stroke="#191b23" stroke-width="2.100"/></svg>
<div class="abs" style="left:26.7px;top:695px;width:189px;height:32px;border-radius:6px;background:#0d8ffb"></div>
<div class="pt" style="left:37.5px;top:701px;font-size:16.6px;line-height:19px;font-weight:400;color:#fff;letter-spacing:0.24px;-webkit-text-stroke:.5px #fff">Get recommendations</div>
</div>
<!-- HIGHLIGHT -->
<div class="abs" style="left:1335px;top:29px;width:64px;height:93px;border:6px solid #b98df8"></div>
</div>
</body>
</html>
